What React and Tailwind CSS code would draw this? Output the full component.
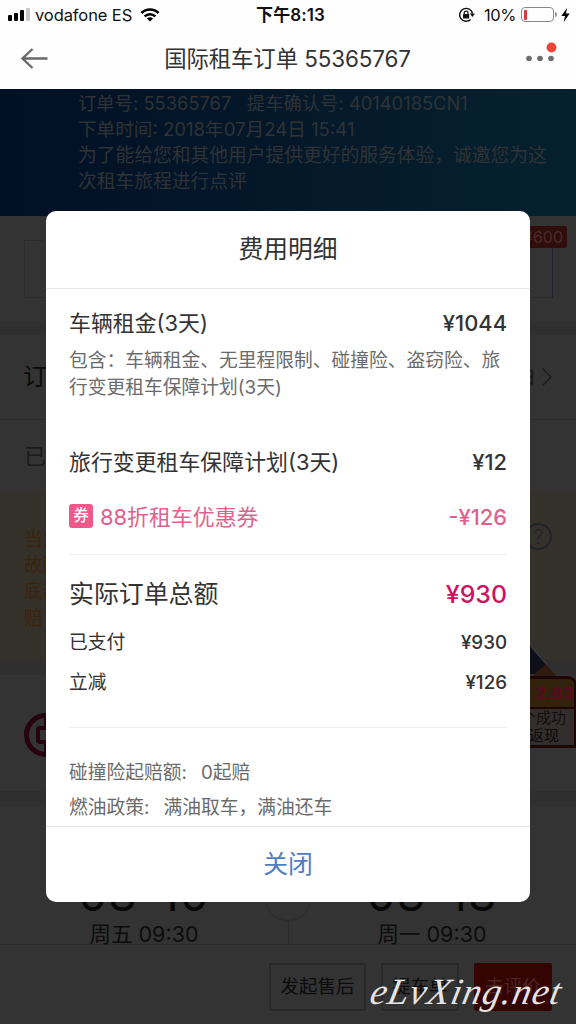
import React from "react";

const WifiIcon = () => (
  <svg width="20" height="14" viewBox="0 0 20 14" className="ml-[4px]">
    <path d="M1.4 5 A12.3 12.3 0 0 1 18.6 5" fill="none" stroke="#000" strokeWidth="2.6" />
    <path d="M4.6 8.3 A7.8 7.8 0 0 1 15.4 8.3" fill="none" stroke="#000" strokeWidth="2.5" />
    <path d="M10 13.6 L6.9 10.5 A4.4 4.4 0 0 1 13.1 10.5 Z" fill="#000" />
  </svg>
);

const RotationLockIcon = () => (
  <svg width="18" height="16" viewBox="0 0 18 16">
    <path d="M12.6 12.4 A6.4 6.4 0 1 1 14.4 6.6" fill="none" stroke="#111" strokeWidth="1.4" />
    <path d="M11.8 6.4 H17 L14.4 10 Z" fill="#111" />
    <rect x="5" y="7" width="6.2" height="4.6" rx="0.6" fill="#111" />
    <path d="M6.2 7.4 V6 a1.9 1.9 0 0 1 3.8 0 V7.4" fill="none" stroke="#111" strokeWidth="1.2" />
  </svg>
);

const StatusBar = () => (
  <div className="grid h-[29px] grid-cols-3 items-center text-[#111]">
    <div className="flex items-center pl-[8px]">
      <div className="flex h-[13px] items-end gap-[2px]">
        <span className="h-[6px] w-[4px] rounded-[1px] bg-black" />
        <span className="h-[8px] w-[4px] rounded-[1px] bg-black" />
        <span className="h-[11px] w-[4px] rounded-[1px] bg-black" />
        <span className="h-[13px] w-[4px] rounded-[1px] bg-[#c9c9c9]" />
      </div>
      <span className="ml-[5px] mt-[2px] whitespace-nowrap text-[16.5px] tracking-[-0.1px]">vodafone ES</span>
      <span className="ml-[4px] flex"><WifiIcon /></span>
    </div>
    <div className="pl-[5px] pt-[2px] text-center text-[17px] font-semibold tracking-[0.1px]">下午8:13</div>
    <div className="flex items-center justify-end pr-[6px]">
      <RotationLockIcon />
      <span className="ml-[8px] mt-[2px] text-[16.5px] tracking-[-0.4px]">10%</span>
      <span className="ml-[5px] flex h-[15px] w-[33px] items-center rounded-[4px] border border-[#8a8a8a] p-[2px]">
        <span className="h-[10px] w-[3px] rounded-[1px] bg-[#d8383f]" />
      </span>
      <span className="ml-px h-[5px] w-[2px] rounded-r bg-[#999]" />
      <svg width="9" height="14" viewBox="0 0 9 14" className="ml-[4px]">
        <path d="M6 0 L0.3 8 H4 L2.7 14 L8.7 5.6 H5 Z" fill="#000" />
      </svg>
    </div>
  </div>
);

const NavBar = () => (
  <div className="flex h-[60px] items-center justify-between pl-[20px] pr-[19px]">
    <svg width="32" height="24" viewBox="0 0 32 24">
      <path d="M12.5 2 L2.5 11.5 L12.5 21 M2.5 11.5 H27.5" fill="none" stroke="#6a6a6a" strokeWidth="2.4" />
    </svg>
    <h1 className="whitespace-nowrap text-[22.4px] font-normal tracking-[-0.1px] text-[#333]">国际租车订单 55365767</h1>
    <svg width="34" height="36" viewBox="0 0 34 36">
      <circle cx="6" cy="17.5" r="2.8" fill="#6c6c6c" />
      <circle cx="17" cy="17.5" r="2.8" fill="#6c6c6c" />
      <circle cx="28" cy="17.5" r="2.8" fill="#6c6c6c" />
      <circle cx="28.5" cy="6.5" r="4.9" fill="#ec4537" />
    </svg>
  </div>
);

const Sticker = () => (
  <div className="absolute right-[-1px] top-[-28px] flex w-[66px] flex-col">
    <svg width="66" height="29" viewBox="0 0 66 29" className="block">
      <path d="M10 -14 L36 17 L30 27 H12 Z" fill="#0e0f18" />
      <path d="M19 -2 L37 19" stroke="#3b3c48" strokeWidth="1.5" />
      <path d="M27 24 L35 17 L45 29 H22 Z" fill="#30190d" />
    </svg>
    <div className="rounded-tr-[9px] border-[3px] border-[#1d0500] bg-[#332e2d]">
      <div className="flex h-[28px] items-center justify-end rounded-tr-[6px] bg-[#33220b] text-[16.5px] font-bold tracking-[0.4px] text-[#5b0820]">2.83</div>
      <div className="flex h-[38px] flex-col items-end border-t-2 border-[#1d0500] pr-[8px] text-[15px] leading-[18px] text-[#090909]">
        <span className="text-[#170d0c]">个成功</span>
        <span className="mr-[7px]">返现</span>
      </div>
    </div>
  </div>
);

const DateColumn = ({ date, time }) => (
  <div className="flex w-[290px] flex-col items-center">
    <div className="text-[46px] leading-[52px] tracking-[1px] text-[#080808]">{date}</div>
    <div className="mt-[-1px] text-[21.5px] leading-[30px] text-[#0c0c0c]">{time}</div>
  </div>
);

const OrderPage = () => (
  <main className="flex h-[935px] flex-col overflow-hidden bg-[#333]">
    <section className="h-[127px] shrink-0 bg-linear-to-r from-[#021025] via-[#04182a] to-[#06212e] pl-[78px] pt-px text-[18.75px] leading-[26.4px] text-[#2f3335]">
      <p className="whitespace-pre text-[18.3px] tracking-[0.03px]">订单号: 55365767   提车确认号: 40140185CN1</p>
      <p className="whitespace-pre text-[18.6px]">下单时间: 2018年07月24日 15:41</p>
      <p className="w-[476px]">为了能给您和其他用户提供更好的服务体验，诚邀您为这次租车旅程进行点评</p>
    </section>
    <section className="h-[106px] shrink-0 px-[24px] pt-[24px]">
      <div className="relative mr-[-1px] flex h-[58px] border border-[#2b2b2b] border-r-[#22222e]">
        <span className="absolute right-[-15px] top-[-15px] flex h-[22px] w-[60px] items-center justify-end rounded-[3px] bg-[#300d0b] pr-[4px] text-[16px] text-[#4a2b29]">¥600</span>
      </div>
    </section>
    <div className="h-[13px] shrink-0 bg-[#2f2f2f]" />
    <section className="flex h-[85px] shrink-0 items-center justify-between border-b border-[#2b2b2b] pl-[23px] pr-[23px]">
      <span className="text-[24px] text-[#0b0b0b]">订</span>
      <span className="flex items-center text-[18px] text-[#151515]">
        日
        <svg width="12" height="20" viewBox="0 0 12 20" className="ml-[5px]">
          <path d="M1.5 1.5 L10 10 L1.5 18.5" fill="none" stroke="#1c1c1c" strokeWidth="1.5" />
        </svg>
      </span>
    </section>
    <section className="flex h-[73px] shrink-0 items-center pl-[24px] text-[22px] text-[#1b1b1b]">已</section>
    <section className="flex h-[167px] shrink-0 justify-between bg-[#33312a] pl-[24px] pr-[24px] pt-[30px]">
      <div className="pt-[4px] text-[18.75px] leading-[26.2px] text-[#3d230b]">
        <p>当您</p>
        <p>故障</p>
        <p>底部</p>
        <p>赔</p>
      </div>
      <span className="flex h-[27px] w-[27px] items-center justify-center rounded-full border-2 border-[#20232e] text-[20px] font-light text-[#20232e]">?</span>
    </section>
    <div className="h-[15px] shrink-0 bg-[#2f2f2f]" />
    <section className="relative flex h-[116px] shrink-0 items-center pl-[24px]">
      <svg width="44" height="44" viewBox="0 0 44 44" className="mt-[4px]">
        <circle cx="22" cy="22" r="19.5" fill="none" stroke="#28010f" strokeWidth="5" />
        <rect x="14" y="15" width="16" height="14" rx="2" fill="none" stroke="#28010f" strokeWidth="4" />
        <path d="M22 3 V15 M22 29 V41" stroke="#28010f" strokeWidth="4" />
      </svg>
      <Sticker />
    </section>
    <div className="h-[15px] shrink-0 bg-[#2f2f2f]" />
    <section className="relative flex h-[139px] shrink-0 justify-between border-b border-[#2c2c2c] pt-[62px]">
      <DateColumn date="08-10" time="周五 09:30" />
      <div className="-mx-[24px] flex w-[48px] shrink-0 flex-col items-center">
        <div className="h-[53px] w-[48px] shrink-0 rounded-full border border-[#2c2c2c]" />
        <div className="w-px grow bg-[#2a2a2a]" />
      </div>
      <DateColumn date="08-13" time="周一 09:30" />
    </section>
    <footer className="flex grow justify-end gap-[15px] pr-[24px] pt-[18px] text-[18.5px] text-[#0b0b0b]">
      <span className="flex h-[48px] w-[97px] items-center justify-center rounded-[2px] border-2 border-[#292929]">发起售后</span>
      <span className="flex h-[48px] w-[78px] items-center justify-center rounded-[2px] border-2 border-[#292929]">提车单</span>
      <span className="flex h-[48px] w-[78px] items-center justify-center rounded-[2px] bg-[#330402] text-[#4b2422]">去评价</span>
    </footer>
  </main>
);

const Row = ({ label, value, className }) => (
  <div className={`flex items-center justify-between ${className}`}>
    <span>{label}</span>
    <span className="font-medium">{value}</span>
  </div>
);

const FeeDialog = () => (
  <div role="dialog" className="absolute left-[46px] top-[211px] flex h-[691px] w-[484px] flex-col rounded-[10px] bg-white text-[#333]">
    <h2 className="flex h-[78px] shrink-0 items-center justify-center border-b border-[#e8e8e8] pt-px text-[24.8px] font-normal">费用明细</h2>
    <div className="flex h-[537px] shrink-0 flex-col px-[23px] pt-[13px]">
      <Row label="车辆租金(3天)" value="¥1044" className="h-[42px] text-[21.9px]" />
      <p className="mt-[4px] w-[440px] text-[18.75px] leading-[26.5px] text-[#6b6b6b]">
        包含：车辆租金、无里程限制、碰撞险、盗窃险、旅行变更租车保障计划(3天)
      </p>
      <Row label="旅行变更租车保障计划(3天)" value="¥12" className="mt-[41px] h-[40px] text-[21.9px]" />
      <Row
        label={
          <span className="flex items-center gap-[7px]">
            <span className="mb-[2px] flex h-[24px] w-[24px] items-center justify-center rounded-[3px] bg-[#f0578a] text-[15.5px] font-medium leading-none text-white">券</span>
            88折租车优惠券
          </span>
        }
        value="-¥126"
        className="mt-[15px] h-[40px] text-[21.9px] text-[#e0628c]"
      />
      <hr className="mt-[17px] border-[#efefef]" />
      <div className="mt-[20px] flex h-[40px] items-center justify-between text-[24.9px]">
        <span>实际订单总额</span>
        <span className="font-medium text-[#cf125f]">¥930</span>
      </div>
      <Row label="已支付" value="¥930" className="mt-[8px] h-[40px] text-[18.75px]" />
      <Row label="立减" value="¥126" className="h-[40px] text-[18.75px]" />
      <hr className="mt-[24px] border-[#efefef]" />
      <div className="mt-[27px] text-[18.75px] leading-[35px] text-[#6b6b6b]">
        <p className="flex gap-[6px]"><span>碰撞险起赔额:</span><span className="pl-[8px]">0起赔</span></p>
        <p className="flex gap-[6px]"><span>燃油政策:</span><span className="pl-[8px]">满油取车，满油还车</span></p>
      </div>
    </div>
    <button className="grow rounded-b-[10px] border-t border-[#e8e8e8] text-[24.8px] text-[#4f7cc4]">关闭</button>
  </div>
);

export default function App() {
  return (
    <div lang="zh-CN" className="relative h-[1024px] w-[576px] overflow-hidden bg-[#fefefe] font-['Inter','Noto_Sans_CJK_SC',sans-serif]">
      <StatusBar />
      <NavBar />
      <OrderPage />
      <FeeDialog />
      <span className="absolute bottom-[8px] right-[14px] -skew-x-12 whitespace-nowrap font-['Liberation_Serif',serif] text-[37px] italic leading-[48px] tracking-[1.2px] text-[#e4e4e4]">eLvXing.net</span>
    </div>
  );
}
